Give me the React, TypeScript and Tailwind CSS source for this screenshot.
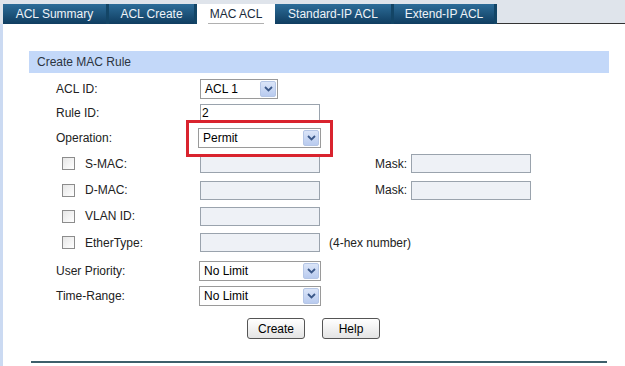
import React from "react";

const font = { fontFamily: '"Liberation Sans", Arial, sans-serif' };

function Arrow() {
  return (
    <span className="flex h-[16px] w-[16px] items-center justify-center rounded-[2px] border border-[#b5c6e6] bg-gradient-to-b from-[#dbe5f8] to-[#b9cbef]">
      <svg width="9" height="6" viewBox="0 0 9 6">
        <path d="M1 1 L4.5 4.5 L8 1" stroke="#3b5889" strokeWidth="1.8" fill="none" />
      </svg>
    </span>
  );
}

function Select({ value, w }: { value: string; w: string }) {
  return (
    <div className={`flex h-[20px] ${w} items-center justify-between border border-[#9a9a9a] bg-white pl-[4px] pr-[1px] text-[12px] text-black`}>
      <span>{value}</span>
      <Arrow />
    </div>
  );
}

function Input({ value = "", white = false }: { value?: string; white?: boolean }) {
  return (
    <div className={`flex h-[19px] w-[120px] items-center border border-[#9aa3ad] ${white ? "bg-white" : "bg-[#eef1f6]"} pl-[1px] text-[12px] text-black`}>
      {value}
    </div>
  );
}

function Check() {
  return <span className="block h-[13px] w-[13px] border border-[#8c8c8c] bg-gradient-to-br from-[#e6e6e6] to-white" />;
}

function Row({ h, label, check, children }: { h: string; label: string; check?: boolean; children: React.ReactNode }) {
  return (
    <div className={`flex ${h} items-center`}>
      <div className="flex w-[171px] items-center pl-[27px] text-[12px] text-[#222]">
        {check ? (
          <>
            <span className="ml-[6px] mr-[10px]"><Check /></span>
            <span>{label}</span>
          </>
        ) : (
          <span>{label}</span>
        )}
      </div>
      {children}
    </div>
  );
}

function Tab({ label, w }: { label: string; w: string }) {
  return (
    <div className={`flex h-[20px] ${w} items-center justify-center border-r-[3px] border-r-[#134566] bg-gradient-to-b from-[#2d6d99] to-[#0f3d60] text-[12px] text-[#eef3f8]`}>
      {label}
    </div>
  );
}

export default function App() {
  return (
    <div style={font} className="h-[366px] w-[625px] overflow-hidden bg-white">
      {/* tab bar */}
      <div className="flex h-[24px] items-end bg-[#dfe4eb] pl-[3px]">
        <div className="flex items-end">
          <Tab label="ACL Summary" w="w-[106px]" />
          <Tab label="ACL Create" w="w-[88px]" />
          <div className="flex h-[21px] w-[78px] translate-y-[1px] flex-col items-center justify-center bg-white text-[12px] text-[#1a2a3a]">
            <span className="border-b border-[#b0b0b0] px-[2px] leading-[18px]">MAC ACL</span>
          </div>
          <Tab label="Standard-IP ACL" w="w-[119px]" />
          <Tab label="Extend-IP ACL" w="w-[103px]" />
        </div>
        <div className="h-[1px] flex-1 bg-[#333]" />
      </div>

      {/* body */}
      <div className="flex h-[342px]">
        <div className="w-[3px] bg-[#cbdaf2]" />
        <div className="flex-1 pl-[26px] pr-[16px] pt-[27px]">
          <div className="flex h-[22px] items-center bg-[#c3d8f9] pl-[8px] text-[12px] text-[#2b3440]">
            Create MAC Rule
          </div>
          <div className="pt-[3px]">
            <Row h="h-[25px]" label="ACL ID:">
              <Select value="ACL 1" w="w-[78px]" />
            </Row>
            <Row h="h-[24px]" label="Rule ID:">
              <Input value="2" white />
            </Row>
            <Row h="h-[25px]" label="Operation:">
              <div className="relative">
                <div className="-ml-[2px]">
                  <Select value="Permit" w="w-[123px]" />
                </div>
                <div className="pointer-events-none absolute left-[-14px] top-[-8px] h-[37px] w-[147px] border-[3px] border-[#d9232e]" />
              </div>
            </Row>
            <Row h="h-[27px]" label="S-MAC:" check>
              <Input />
              <span className="ml-[55px] mr-[4px] text-[12px] text-[#222]">Mask:</span>
              <Input />
            </Row>
            <Row h="h-[26px]" label="D-MAC:" check>
              <Input />
              <span className="ml-[55px] mr-[4px] text-[12px] text-[#222]">Mask:</span>
              <Input />
            </Row>
            <Row h="h-[26px]" label="VLAN ID:" check>
              <Input />
            </Row>
            <Row h="h-[27px]" label="EtherType:" check>
              <Input />
              <span className="ml-[9px] text-[12px] text-[#222]">(4-hex number)</span>
            </Row>
            <Row h="h-[29px]" label="User Priority:">
              <div className="-ml-[1px]"><Select value="No Limit" w="w-[122px]" /></div>
            </Row>
            <Row h="h-[21px]" label="Time-Range:">
              <div className="-ml-[1px]"><Select value="No Limit" w="w-[122px]" /></div>
            </Row>
            <div className="flex gap-[17px] pl-[218px] pt-[12px]">
              <button className="h-[21px] w-[58px] rounded-[3px] border border-[#555] bg-gradient-to-b from-white to-[#e4e4e4] text-[12px] text-black">
                Create
              </button>
              <button className="h-[21px] w-[58px] rounded-[3px] border border-[#555] bg-gradient-to-b from-white to-[#e4e4e4] text-[12px] text-black">
                Help
              </button>
            </div>
            <div className="ml-[2px] mr-[2px] mt-[22px] h-[2px] bg-[#3d5f6b]" />
          </div>
        </div>
      </div>
    </div>
  );
}
